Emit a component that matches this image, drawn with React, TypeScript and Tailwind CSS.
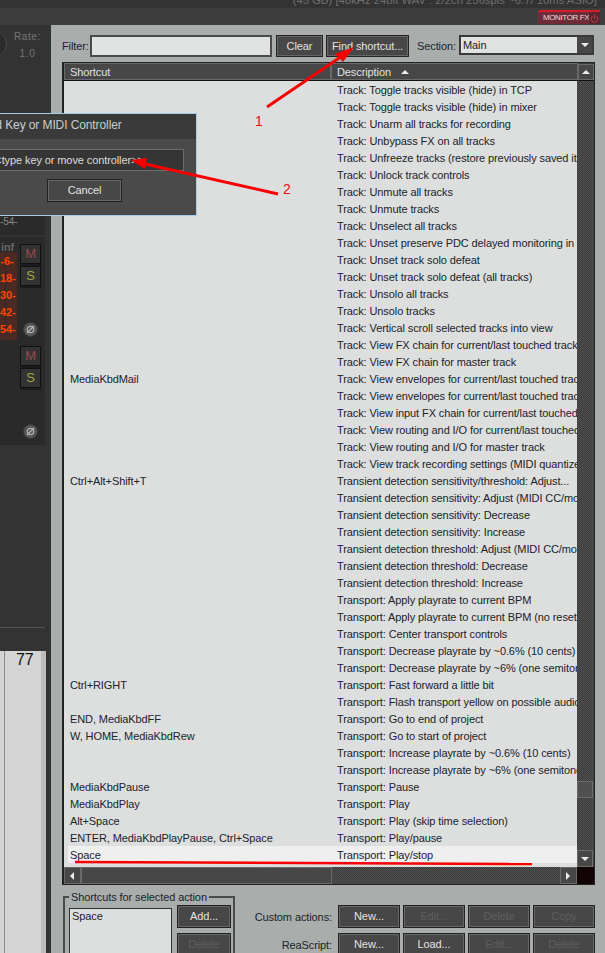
import { Power } from "lucide-react";

const rows: [string, string][] = [
  ["", "Track: Toggle tracks visible (hide) in TCP"],
  ["", "Track: Toggle tracks visible (hide) in mixer"],
  ["", "Track: Unarm all tracks for recording"],
  ["", "Track: Unbypass FX on all tracks"],
  ["", "Track: Unfreeze tracks (restore previously saved items and FX)"],
  ["", "Track: Unlock track controls"],
  ["", "Track: Unmute all tracks"],
  ["", "Track: Unmute tracks"],
  ["", "Track: Unselect all tracks"],
  ["", "Track: Unset preserve PDC delayed monitoring in recording"],
  ["", "Track: Unset track solo defeat"],
  ["", "Track: Unset track solo defeat (all tracks)"],
  ["", "Track: Unsolo all tracks"],
  ["", "Track: Unsolo tracks"],
  ["", "Track: Vertical scroll selected tracks into view"],
  ["", "Track: View FX chain for current/last touched track"],
  ["", "Track: View FX chain for master track"],
  ["MediaKbdMail", "Track: View envelopes for current/last touched track"],
  ["", "Track: View envelopes for current/last touched track"],
  ["", "Track: View input FX chain for current/last touched track"],
  ["", "Track: View routing and I/O for current/last touched track"],
  ["", "Track: View routing and I/O for master track"],
  ["", "Track: View track recording settings (MIDI quantize, etc)"],
  ["Ctrl+Alt+Shift+T", "Transient detection sensitivity/threshold: Adjust..."],
  ["", "Transient detection sensitivity: Adjust (MIDI CC/mousewheel)"],
  ["", "Transient detection sensitivity: Decrease"],
  ["", "Transient detection sensitivity: Increase"],
  ["", "Transient detection threshold: Adjust (MIDI CC/mousewheel)"],
  ["", "Transient detection threshold: Decrease"],
  ["", "Transient detection threshold: Increase"],
  ["", "Transport: Apply playrate to current BPM"],
  ["", "Transport: Apply playrate to current BPM (no reset playrate)"],
  ["", "Transport: Center transport controls"],
  ["", "Transport: Decrease playrate by ~0.6% (10 cents)"],
  ["", "Transport: Decrease playrate by ~6% (one semitone)"],
  ["Ctrl+RIGHT", "Transport: Fast forward a little bit"],
  ["", "Transport: Flash transport yellow on possible audio overload"],
  ["END, MediaKbdFF", "Transport: Go to end of project"],
  ["W, HOME, MediaKbdRew", "Transport: Go to start of project"],
  ["", "Transport: Increase playrate by ~0.6% (10 cents)"],
  ["", "Transport: Increase playrate by ~6% (one semitone)"],
  ["MediaKbdPause", "Transport: Pause"],
  ["MediaKbdPlay", "Transport: Play"],
  ["Alt+Space", "Transport: Play (skip time selection)"],
  ["ENTER, MediaKbdPlayPause, Ctrl+Space", "Transport: Play/pause"],
  ["Space", "Transport: Play/stop"],
];

const dither =
  "bg-[repeating-conic-gradient(#3a3a3a_0_25%,#525252_0_50%)] bg-[length:2px_2px]";

const Btn = ({ label, w, h = "h-[23px] pb-px", off }: { label: string; w: string; h?: string; off?: boolean }) => (
  <div
    className={`${w} ${h} shrink-0 flex items-center justify-center bg-[#474747] border border-[#222] shadow-[inset_0_0_0_1px_#666] ${
      off ? "text-[#5e5e5e]" : "text-[#e2e2e2]"
    }`}
  >
    {label}
  </div>
);

type Dir = "up" | "down" | "left" | "right";

const Arrow = ({ dir }: { dir: Dir }) => {
  const pts = {
    up: "1,6 5,2 9,6",
    down: "1,2 5,6 9,2",
    left: "6,0 2,4 6,8",
    right: "2,0 6,4 2,8",
  }[dir];
  return (
    <svg width="10" height="8" viewBox="0 0 10 8">
      <polygon points={pts} fill="#ececec" />
    </svg>
  );
};

const ScrollBtn = ({ dir, className }: { dir: Dir; className: string }) => (
  <div
    className={`${className} shrink-0 flex items-center justify-center bg-[#474747] border border-[#6a6a6a]`}
  >
    <Arrow dir={dir} />
  </div>
);

const Strip = ({ h }: { h: string }) => (
  <div className={`${h} flex flex-col`}>
    <div className="w-[21px] h-[20px] flex items-center justify-center bg-[#333] border border-[#111] shadow-[0_2px_0_#1c1c1c] text-[13px] text-[#9a4a4a]">
      M
    </div>
    <div className="mt-[2px] w-[21px] h-[20px] flex items-center justify-center bg-[#333] border border-[#111] shadow-[0_2px_0_#1c1c1c] text-[13px] text-[#a5a548]">
      S
    </div>
    <div className="mt-[36px] ml-[3px] w-[15px] h-[15px] rounded-full bg-[#565656] border border-[#3a3a3a] flex items-center justify-center">
      <svg width="11" height="11" viewBox="0 0 11 11" fill="none" stroke="#b4b4b4" strokeWidth="1.2">
        <circle cx="5.5" cy="5.5" r="3.2" />
        <path d="M2 9 9 2" />
      </svg>
    </div>
  </div>
);

export default function App() {
  return (
    <div
      className="relative w-[605px] h-[953px] overflow-hidden flex flex-col bg-[#3d3d3d] text-[11px] tracking-[-0.1px]"
      style={{ fontFamily: '"Liberation Sans", Arial, sans-serif' }}
    >
      {/* Top bar */}
      <div className="h-[8px] shrink-0 bg-[#333] overflow-hidden flex justify-end pr-[8px]">
        <div className="-mt-[7px] text-[11.3px] leading-[14px] tracking-normal text-[#6f6f6f] whitespace-nowrap">
          (45 GB) [48kHz 24bit WAV : 2/2ch 256spls ~6.7/ 10ms ASIO]
        </div>
      </div>
      <div className="h-[17px] shrink-0 flex justify-end items-start pr-[5px]">
        <div className="mt-[2px] w-[62px] h-[14px] bg-[#6d2c38] border-t-2 border-[#d81c2c] flex items-center justify-between pl-[5px] rounded-tl-[3px]">
          <span className="text-[8px] leading-[10px] tracking-[-0.4px] text-[#e8dede] whitespace-nowrap">MONITOR FX</span>
          <div className="w-[12px] h-full bg-[#5a2530] flex items-center justify-center">
            <Power size={9} className="text-[#e04848]" />
          </div>
        </div>
      </div>

      <div className="flex-1 flex min-h-0">
        {/* Left: mixer + arrange view */}
        <div className="w-[51px] shrink-0 bg-[#333] flex flex-col overflow-hidden">
          <div className="h-[175px] shrink-0 flex items-start">
            <div className="-ml-[21px] mt-[5px] w-[28px] h-[28px] shrink-0 rounded-full bg-[#2b2b2b] border border-[#4a4a4a]" />
            <div className="ml-[7px] mt-[3px] flex flex-col items-center text-[10px] leading-[17px] tracking-[0.6px] text-[#757575]">
              <span>Rate:</span>
              <span>1.0</span>
            </div>
          </div>
          <div className="w-[45px] h-[35px] shrink-0 bg-[#2a2a2a] pt-[15px] text-[10px] leading-[14px] text-[#8a8a8a]">
            -54-
          </div>
          <div className="mt-[2px] w-[45px] h-[208px] shrink-0 bg-[#2a2a2a] flex">
            <div className="w-[20px] shrink-0 flex flex-col">
              <div className="h-[15px] pt-[5px] pl-[1px] text-[11px] leading-[11px] font-bold text-[#666]">inf</div>
              <div className="relative w-[17px] h-[88px] bg-[#4a2a22] text-[11px] font-bold leading-[17px] text-[#ff4400] text-center pr-[3px]">
                <div className="absolute left-[5px] top-0 bottom-0 w-px bg-[#2a2a2a]" />
                <div className="relative pt-[1px]">
                  <div>-6-</div>
                  <div>18-</div>
                  <div>30-</div>
                  <div>42-</div>
                  <div>54-</div>
                </div>
              </div>
            </div>
            <div className="pt-[7px]">
              <Strip h="h-[102px]" />
              <Strip h="h-[95px]" />
            </div>
          </div>
          <div className="w-[45px] h-[183px] shrink-0 border-b border-[#555]" />
          <div className="h-[23px] shrink-0" />
          <div className="flex-1 flex">
            <div className="w-[41px] bg-[#d4d4d4] pl-[4px] flex">
              <div className="w-px bg-[#8a8a8a]" />
              <div className="pl-[11px] text-[16px] leading-[18px] text-[#111]">77</div>
            </div>
            <div className="w-[5px] bg-[#bcbcbc]" />
          </div>
        </div>

        {/* Actions panel */}
        <div className="flex-1 min-w-0 bg-[#a9aeac] flex flex-col pt-[10px] pl-[11px] pr-[10px] text-[#20222c]">
          <div className="h-[22px] shrink-0 flex items-start">
            <span className="w-[28px] shrink-0 leading-[23px]">Filter:</span>
            <div className="w-[182px] h-[22px] shrink-0 bg-[#e1e3e2] border-2 border-[#4a4a4a]" />
            <div className="ml-[4px]">
              <Btn label="Clear" w="w-[47px]" h="h-[22px]" />
            </div>
            <div className="ml-[3px]">
              <Btn label="Find shortcut..." w="w-[83px]" h="h-[22px]" />
            </div>
            <span className="ml-[8px] w-[42px] shrink-0 leading-[23px]">Section:</span>
            <div className="w-[135px] h-[20px] shrink-0 bg-[#e1e3e2] border-2 border-[#3a3a3a] flex items-center justify-between">
              <span className="pl-[2px]">Main</span>
              <div className="w-[15px] h-full bg-[#474747] flex items-center justify-center">
                <Arrow dir="down" />
              </div>
            </div>
          </div>

          {/* List */}
          <div className="mt-[5px] h-[823px] shrink-0 border border-[#222] border-l-2 bg-[#3c3c3c] flex flex-col">
            <div className="h-[18px] shrink-0 flex items-stretch border-b border-[#111] text-[#e2e2e2]">
              <div className="w-[267px] shrink-0 pl-[5px] pt-px flex items-center bg-[#474747] border border-[#6a6a6a]">
                Shortcut
              </div>
              <div className="w-[247px] shrink-0 pl-[5px] pt-px flex items-center gap-[9px] bg-[#474747] border border-[#6a6a6a]">
                Description
                <Arrow dir="up" />
              </div>
              <ScrollBtn dir="up" className="w-[16px] mt-[1px]" />
            </div>

            <div className="h-[786px] shrink-0 flex">
              <div className="w-[513px] shrink-0 bg-[#dddfde] pl-[4px] overflow-hidden flex flex-col">
                {rows.map(([key, desc], i) => (
                  <div
                    key={i}
                    className={`h-[17px] shrink-0 pt-px flex items-center whitespace-nowrap ${
                      i === rows.length - 1 ? "bg-[#efefef]" : ""
                    }`}
                  >
                    <div className="w-[269px] shrink-0 pl-[2px] overflow-hidden">{key}</div>
                    <div className="flex-1 min-w-0 pr-[3px] overflow-hidden">{desc}</div>
                  </div>
                ))}
              </div>
              <div className={`flex-1 flex flex-col pr-px ${dither}`}>
                <div className="mt-auto w-[16px] h-[17px] bg-[#505050] border border-[#6a6a6a] mb-[52px]" />
                <ScrollBtn dir="down" className="w-[16px] h-[17px]" />
              </div>
            </div>

            <div className={`flex-1 flex ${dither}`}>
              <ScrollBtn dir="left" className="w-[17px]" />
              <div className="w-[251px] bg-[#474747] border border-[#6a6a6a]" />
              <div className="flex-1" />
              <ScrollBtn dir="right" className="w-[17px]" />
              <div className="w-[17px] bg-[#120404]" />
            </div>
          </div>

          {/* Bottom section */}
          <div className="flex min-h-0">
            <div className="relative mt-[11px] ml-px w-[172px] h-[80px] shrink-0 border-2 border-[#4a4a4a] pt-[7px] pl-[4px] flex">
              <div className="absolute left-[4px] -top-[9px] px-[2px] bg-[#a9aeac] leading-[16px] whitespace-nowrap">
                Shortcuts for selected action
              </div>
              <div className="mt-[3px] w-[103px] h-[60px] shrink-0 bg-[#dddfde] border border-[#333] pl-[2px] leading-[15px]">
                Space
              </div>
              <div className="ml-[5px] flex flex-col gap-[5px]">
                <Btn label="Add..." w="w-[54px]" />
                <Btn label="Delete" w="w-[54px]" off />
              </div>
            </div>
            <div className="flex-1 mt-[20px] flex flex-col gap-[5px]">
              <div className="flex items-center justify-end gap-[3px]">
                <span className="mr-[3px] pt-px">Custom actions:</span>
                <Btn label="New..." w="w-[62px]" />
                <Btn label="Edit..." w="w-[62px]" off />
                <Btn label="Delete" w="w-[62px]" off />
                <Btn label="Copy" w="w-[62px]" off />
              </div>
              <div className="flex items-center justify-end gap-[3px]">
                <span className="mr-[3px] pt-px">ReaScript:</span>
                <Btn label="New..." w="w-[62px]" />
                <Btn label="Load..." w="w-[62px]" />
                <Btn label="Edit..." w="w-[62px]" off />
                <Btn label="Delete" w="w-[62px]" off />
              </div>
            </div>
          </div>
        </div>
      </div>

      {/* Learn dialog, floats over the window */}
      <div className="absolute -left-[28px] top-[113px] w-[225px] h-[103px] border border-[#a8cce8] bg-[#4a4a4a] flex flex-col items-center text-[#dcdcdc]">
        <div className="w-full h-[25px] shrink-0 bg-[#3a3a3a] pl-[6px] pb-[3px] flex items-center text-[12px] text-[#c8ccd0]">
          Find Key or MIDI Controller
        </div>
        <div className="mt-[10px] w-[199px] h-[22px] shrink-0 bg-[#353535] border border-[#6e6e6e] pl-[3px] flex items-center whitespace-nowrap">
          &lt;&lt;type key or move controller&gt;&gt;
        </div>
        <div className="mt-[8px]">
          <Btn label="Cancel" w="w-[75px]" />
        </div>
      </div>

      {/* Hand-drawn annotations */}
      <svg className="absolute inset-0 pointer-events-none" width="605" height="953" viewBox="0 0 605 953">
        <path d="M267 107 345 54" stroke="#f80000" strokeWidth="3" fill="none" />
        <polygon points="354,47 335,54 343,62" fill="#f80000" />
        <path d="M278 194 145 164" stroke="#f80000" strokeWidth="3" fill="none" />
        <polygon points="131,160 147,158 145,169" fill="#f80000" />
        <path d="M75 862 Q300 864 532 864" stroke="#f80000" strokeWidth="2.5" fill="none" />
      </svg>
      <div className="absolute left-[255px] top-[113px] text-[14px] leading-[16px] text-[#e81010]">1</div>
      <div className="absolute left-[283px] top-[181px] text-[14px] leading-[16px] text-[#e81010]">2</div>
    </div>
  );
}
